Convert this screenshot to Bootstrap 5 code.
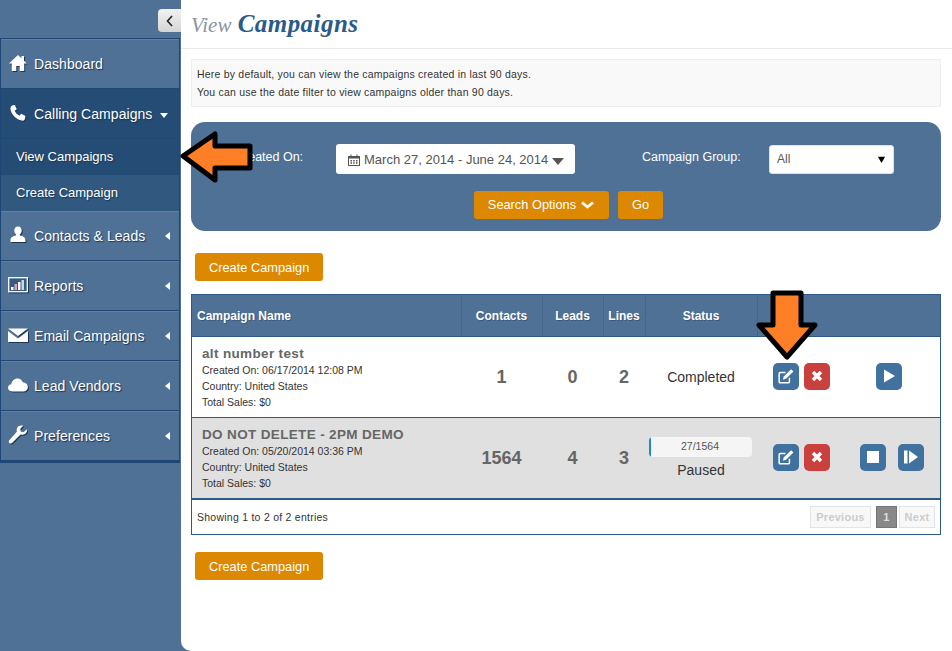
<!DOCTYPE html>
<html lang="en">
<head>
    <meta charset="UTF-8">
    <meta name="viewport" content="width=device-width, initial-scale=1.0">
    <title>View Campaigns</title>
    <link href="https://cdn.jsdelivr.net/npm/bootstrap@5.3.0/dist/css/bootstrap.min.css" rel="stylesheet">
    <style>
        html, body { height: 100%; }
        body { font-family: "Liberation Sans", Arial, sans-serif; background: #4f7196; overflow: hidden; position: relative; color: #333; }
        a { text-decoration: none; }
        .page-wrap { height: 651px; }

        /* sidebar */
        .side { width: 181px; flex: none; padding-top: 9px; }
        .side-toggle { width: 23px; height: 23px; margin-left: auto; margin-bottom: 6px; background: linear-gradient(#f2f2f2, #d5d5d5); border-radius: 4px 0 0 4px; }
        .side-menu { width: 180px; border: 1px solid #1f4776; border-bottom-width: 2px; }
        .side-menu .nav-link { height: 50px; display: flex; align-items: center; color: #fff; font-size: 14px; letter-spacing: .05px; padding: 0 0 0 7px; border-bottom: 1px solid #1f4776; border-top: 1px solid #5f81a6; text-shadow: 1px 1px 1px #1c3553; }
        .side-menu .nav-link.is-open { background: #254c74; border-top-color: #254c74; }
        .side-menu .nav-link svg.ico { width: 20px; height: 20px; margin: -3px 6px 0 0; flex: none; filter: drop-shadow(1px 1px 0 #1c3553); }
        .side-menu .sub-link { height: 36px; display: flex; align-items: center; padding-left: 15px; color: #fff; font-size: 13px; background: #31587f; text-shadow: 1px 1px 1px #1c3553; }
        .side-menu .sub-link.now { background: #254c74; }
        .caret-left { width: 0; height: 0; border: 4px solid transparent; border-right: 5px solid #fff; border-left: 0; margin-left: auto; margin-right: 9px; }
        .caret-down { width: 0; height: 0; border: 4px solid transparent; border-top: 5px solid #fff; border-bottom: 0; margin-left: 8px; margin-top: 3px; }

        /* main */
        .main-area { background: #fff; flex: 1; border-radius: 0 0 0 10px; padding: 0 11px 0 10px; min-width: 0; }
        .head-bar { height: 49px; margin: 0 -11px 10px -10px; padding: 6px 0 0 10px; border-bottom: 1px solid #eaeaea; font-family: "Liberation Serif", "Times New Roman", serif; font-style: italic; font-size: 21px; color: #8b959f; line-height: 36px; }
        .head-bar b { font-size: 25px; color: #2c5a88; letter-spacing: .45px; margin-left: 1px; }
        .info-box { height: 48px; background: #f9f9f9; border: 1px solid #eee; padding: 5px 5px; font-size: 10.5px; line-height: 18px; letter-spacing: .21px; color: #333; }
        .filter-box { height: 109px; margin-top: 15px; background: #4f7196; border-radius: 14px; padding: 22px 0 0 44px; color: #fff; font-size: 12.5px; }
        .filter-lbl { width: 101px; margin-top: -4px; }
        .date-pick { width: 239px; height: 30px; background: #fff; border-radius: 3px; color: #555; font-size: 13px; padding: 1px 0 0 12px; gap: 4px; white-space: nowrap; }
        .group-lbl { margin-left: 67px; width: 127px; margin-top: -4px; }
        .group-sel { width: 125px; height: 29px; padding: 2px 7px; font-size: 12px; color: #555; border-radius: 3px; background-size: 9px; background-position: right 7px center; background-image: url("data:image/svg+xml,%3csvg xmlns='http://www.w3.org/2000/svg' viewBox='0 0 10 10'%3e%3cpath d='M1 2h8L5 9z' fill='%23000'/%3e%3c/svg%3e"); }
        .filter-btns { margin: 17px 0 0 -44px; padding-left: 5px; gap: 9px; }
        .btn-org { background: #dc8800; color: #fff; border: 0; border-radius: 3px; font-size: 12.8px; height: 28px; padding: 0 14px; display: inline-flex; align-items: center; }
        .btn-org:hover { background: #c97c00; color: #fff; }
        .create-btn { margin-left: 4px; }
        .create-btn .btn-org { padding-top: 1px; }
        .first-create { margin-top: 22px; }

        /* table */
        .camp-wrap { margin-top: 13px; border: 1px solid #2f5a88; }
        .camp-table { table-layout: fixed; margin: 0; width: 100%; }
        .camp-table > thead th { background: #4f7196; color: #fff; height: 41px; font-size: 12px; text-align: center; vertical-align: middle; border-bottom: 1px solid #2f5a88; border-right: 1px solid #456789; padding: 1px 0 0; text-shadow: 1px 1px 0 #3c5a7c; }
        .camp-table > thead th:last-child { border-right: 0; }
        .camp-table > thead th:first-child { text-align: left; padding-left: 5px; }
        .camp-table > tbody td { height: 81px; padding: 9px 0 0; vertical-align: middle; text-align: center; border-bottom: 1px solid #2f5a88; background: #fff; color: #333; box-shadow: none; }
        .camp-table > tbody tr.shaded td { background: #e0e0e0; border-bottom-width: 2px; height: 82px; }
        .camp-table > tbody td.name-cell { text-align: left; padding: 8px 0 0 10px; font-size: 10.5px; line-height: 16px; vertical-align: top; }
        .name-cell strong { display: block; color: #666; font-size: 13.5px; letter-spacing: .35px; line-height: 17px; }
        .camp-table > tbody td.num-cell { font-size: 18px; font-weight: 700; color: #666; padding: 2px 0 0; }
        .camp-table > tbody td.stat-cell { font-size: 14px; padding: 2px 0 0; }
        .camp-table > tbody tr.shaded td.stat-cell { padding-top: 3px; }
        .act-row { padding: 0 6px 1px 16px; gap: 5px; }
        .act-btn { width: 26px; height: 27px; border: 0; padding: 0; border-radius: 5px; display: inline-flex; align-items: center; justify-content: center; background: #40719f; }
        .act-btn.del { background: #c9403c; }
        .run-group { width: 82px; margin-left: 7px; gap: 12px; }
        .run-one { margin-right: 22px; }
        .act-btn svg { width: 16px; height: 16px; }
        .load-bar { height: 20px; width: 103px; margin: 0 auto 3px; background: #f5f5f5; border-radius: 4px; position: relative; font-size: 10.5px; color: #555; transform: translateX(-1px); }
        .load-bar .progress-bar { background: #1f8ad0; }
        .load-text { position: absolute; left: 0; right: 0; top: 0; line-height: 19px; }
        .tbl-foot { height: 34px; padding: 1px 5px 0; font-size: 10.5px; letter-spacing: .25px; color: #333; }
        .pager { gap: 6px; margin: -1px 0 0; }
        .pager .page-link, .pager .page-item:first-child .page-link, .pager .page-item:last-child .page-link { font-size: 11px; font-weight: 700; height: 22px; width: 61px; padding: 0; text-align: center; line-height: 20px; color: #ccc; background: #f8f8f8; border: 1px solid #e4e4e4; border-radius: 0; }
        .pager .page-item.active .page-link { background: #888; color: #ddd; border-color: #777; width: 21px; }
        .pager .page-item:last-child { margin-left: -3px; }
        .pager .page-item:last-child .page-link { width: 36px; }
        .second-create { margin-top: 17px; }

        /* arrows drawn over the shot */
        .over-arrow { position: absolute; }
        .arrow-left { left: 178px; top: 129px; }
        .arrow-down { left: 755px; top: 289px; }
    </style>
</head>
<body>
    <div class="d-flex page-wrap">
        <aside class="side">
            <div class="side-toggle d-flex align-items-center justify-content-center">
                <svg width="10" height="12" viewBox="0 0 10 12"><path d="M7 1L2.500 6 7 11" fill="none" stroke="#222" stroke-width="1.600"/></svg>
            </div>
            <ul class="nav flex-column side-menu">
                <li><a class="nav-link" href="#">
                    <svg class="ico" viewBox="0 0 20 20"><path d="M10 2L1 10.500h2.800V18h4.500v-5h3.400v5h4.500v-7.500H19L16 7.700V3h-2.500v2.300z" fill="#fff"/></svg>Dashboard</a></li>
                <li><a class="nav-link is-open" href="#">
                    <svg class="ico" viewBox="0 0 20 20"><path d="M4 2.500L6.800 2l2 4.200-2 1.600c.8 2.300 2.400 4 4.700 5l1.700-2 4.300 2.100-.6 3C16.500 17.300 15 18 13.500 17.600 8 16.300 3.500 11.500 2.500 6.500 2.200 5 2.900 3.300 4 2.500z" fill="#fff"/></svg>Calling Campaigns<span class="caret-down"></span></a>
                    <a class="sub-link now" href="#">View Campaigns</a>
                    <a class="sub-link" href="#">Create Campaign</a></li>
                <li><a class="nav-link" href="#">
                    <svg class="ico" viewBox="0 0 20 20"><path d="M10 1.500c2.500 0 3.700 1.900 3.700 4 0 1.500-.7 3-1.700 3.800v1.200c2.800.8 5.500 1.500 5.500 4.500v2H2.500v-2c0-3 2.700-3.700 5.500-4.500V9.300C7 8.500 6.300 7 6.300 5.500c0-2.100 1.200-4 3.700-4z" fill="#fff"/></svg>Contacts &amp; Leads<span class="caret-left"></span></a></li>
                <li><a class="nav-link" href="#">
                    <svg class="ico" viewBox="0 0 20 20"><rect x=".7" y="2.700" width="18.600" height="14" fill="#365a80" stroke="#fff" stroke-width="1.300"/><rect x="3" y="12" width="2.500" height="3" fill="#fff"/><rect x="6.500" y="9" width="2.500" height="6" fill="#e2a0b8"/><rect x="10" y="7" width="2.500" height="8" fill="#fff"/><rect x="13.500" y="5" width="2.500" height="10" fill="#c9d8ee"/></svg>Reports<span class="caret-left"></span></a></li>
                <li><a class="nav-link" href="#">
                    <svg class="ico" viewBox="0 0 20 20"><path d="M0 3.500h20L10 11zM0 6l10 7.500L20 6v11H0z" fill="#fff"/></svg>Email Campaigns<span class="caret-left"></span></a></li>
                <li><a class="nav-link" href="#">
                    <svg class="ico" viewBox="0 0 20 20"><path d="M4.500 16.500C2 16.500 0 15 0 12.800c0-2 1.500-3.400 3.300-3.600C3.800 6 6.300 3.500 9.500 3.500c2.500 0 4.600 1.400 5.400 3.700 2.800.3 5 2.300 5 5 0 2.500-2 4.300-4.600 4.300z" fill="#fff"/></svg>Lead Vendors<span class="caret-left"></span></a></li>
                <li><a class="nav-link" href="#">
                    <svg class="ico" viewBox="0 0 20 20"><path d="M18.800 4.200l-3.300 3-2.600-.7-.7-2.600 3-3.200c-2.500-.7-5 .1-6 2-.7 1.300-.6 2.800-.2 3.900L1.500 15c-1 1-1 2.200-.2 3 .8.800 2 .8 3-.2l8.300-8.300c1.300.5 2.900.4 4.200-.4 1.800-1.100 2.700-3 2-4.900z" fill="#fff"/></svg>Preferences<span class="caret-left"></span></a></li>
            </ul>
        </aside>

        <main class="main-area">
            <div class="head-bar">View <b>Campaigns</b></div>
            <div class="info-box">Here by default, you can view the campaigns created in last 90 days.<br>You can use the date filter to view campaigns older than 90 days.</div>

            <div class="filter-box">
                <div class="d-flex align-items-center">
                    <span class="filter-lbl">Created On:</span>
                    <div class="date-pick d-flex align-items-center">
                        <svg width="12" height="12" viewBox="0 0 12 12"><path d="M0 2h2.500V.5h1V2h5V.5h1V2H12v10H0zM1 4.500V11h10V4.500zM2.500 6h1.500v1.500H2.500zm2.700 0h1.500v1.500H5.200zm2.800 0h1.500v1.500H8zM2.500 8.300h1.500v1.500H2.500zm2.700 0h1.500v1.500H5.200zm2.800 0h1.500v1.500H8z" fill="#555"/></svg>
                        <span>March 27, 2014 - June 24, 2014</span>
                        <svg width="12" height="7" viewBox="0 0 12 7" class="mt-1"><path d="M0 0h12L6 7z" fill="#555"/></svg>
                    </div>
                    <span class="group-lbl">Campaign Group:</span>
                    <select class="form-select group-sel"><option>All</option></select>
                </div>
                <div class="d-flex justify-content-center filter-btns">
                    <button class="btn-org" type="button">Search Options
                        <svg class="ms-1" width="15" height="10" viewBox="0 0 15 10"><path d="M2 2.500l5.500 4.500 5.500-4.500" fill="none" stroke="#fff" stroke-width="2.800"/></svg>
                    </button>
                    <button class="btn-org" type="button">Go</button>
                </div>
            </div>

            <div class="create-btn first-create"><button class="btn-org" type="button">Create Campaign</button></div>

            <div class="camp-wrap">
                <table class="table camp-table">
                    <colgroup>
                        <col style="width:269px"><col style="width:81px"><col style="width:61px"><col style="width:42px"><col style="width:112px"><col>
                    </colgroup>
                    <thead>
                        <tr><th>Campaign Name</th><th>Contacts</th><th>Leads</th><th>Lines</th><th>Status</th><th></th></tr>
                    </thead>
                    <tbody>
                        <tr>
                            <td class="name-cell"><strong>alt number test</strong>Created On: 06/17/2014 12:08 PM<br>Country: United States<br>Total Sales: $0</td>
                            <td class="num-cell">1</td><td class="num-cell">0</td><td class="num-cell">2</td>
                            <td class="stat-cell">Completed</td>
                            <td class="p-0">
                                <div class="d-flex align-items-center act-row">
                                    <button class="act-btn" type="button"><svg viewBox="1 1 14 14"><path d="M11 9.500V13a1 1 0 0 1-1 1H3a1 1 0 0 1-1-1V6a1 1 0 0 1 1-1h4.500" fill="none" stroke="#fff" stroke-width="1.300"/><path d="M6 8.500L12.500 2l2 2L8 10.500l-2.700.7z" fill="#fff"/></svg></button>
                                    <button class="act-btn del" type="button"><svg viewBox="0 0 16 16"><path d="M4 4l8 8M12 4l-8 8" stroke="#fff" stroke-width="3.400"/></svg></button>
                                    <div class="d-flex justify-content-end run-group">
                                        <button class="act-btn run-one" type="button"><svg viewBox="0 0 16 16"><path d="M3 1.500L14 8 3 14.500z" fill="#fff"/></svg></button>
                                    </div>
                                </div>
                            </td>
                        </tr>
                        <tr class="shaded">
                            <td class="name-cell"><strong>DO NOT DELETE - 2PM DEMO</strong>Created On: 05/20/2014 03:36 PM<br>Country: United States<br>Total Sales: $0</td>
                            <td class="num-cell">1564</td><td class="num-cell">4</td><td class="num-cell">3</td>
                            <td class="stat-cell">
                                <div class="progress load-bar"><div class="progress-bar" style="width:2.500%"></div><span class="load-text">27/1564</span></div>
                                Paused
                            </td>
                            <td class="p-0">
                                <div class="d-flex align-items-center act-row">
                                    <button class="act-btn" type="button"><svg viewBox="1 1 14 14"><path d="M11 9.500V13a1 1 0 0 1-1 1H3a1 1 0 0 1-1-1V6a1 1 0 0 1 1-1h4.500" fill="none" stroke="#fff" stroke-width="1.300"/><path d="M6 8.500L12.500 2l2 2L8 10.500l-2.700.7z" fill="#fff"/></svg></button>
                                    <button class="act-btn del" type="button"><svg viewBox="0 0 16 16"><path d="M4 4l8 8M12 4l-8 8" stroke="#fff" stroke-width="3.400"/></svg></button>
                                    <div class="d-flex justify-content-end run-group">
                                        <button class="act-btn" type="button"><svg viewBox="0 0 16 16"><rect x="2" y="2" width="12" height="12" fill="#fff"/></svg></button>
                                        <button class="act-btn" type="button"><svg viewBox="0 0 16 16"><rect x="1" y="1.500" width="3.500" height="13" fill="#fff"/><path d="M6 1.500L15 8l-9 6.500z" fill="#fff"/></svg></button>
                                    </div>
                                </div>
                            </td>
                        </tr>
                    </tbody>
                </table>
                <div class="d-flex align-items-center justify-content-between tbl-foot">
                    <span>Showing 1 to 2 of 2 entries</span>
                    <ul class="pagination pager">
                        <li class="page-item disabled"><a class="page-link" href="#">Previous</a></li>
                        <li class="page-item active"><a class="page-link" href="#">1</a></li>
                        <li class="page-item disabled"><a class="page-link" href="#">Next</a></li>
                    </ul>
                </div>
            </div>

            <div class="create-btn second-create"><button class="btn-org" type="button">Create Campaign</button></div>
        </main>
    </div>

    <svg class="over-arrow arrow-left" width="78" height="56" viewBox="0 0 78 56"><path d="M5 27L37 5v12h35v22H37v12z" fill="#ff7f27" stroke="#000" stroke-width="5" stroke-linejoin="round"/></svg>
    <svg class="over-arrow arrow-down" width="64" height="72" viewBox="0 0 64 72"><path d="M18 4h28v32h14L32 68 4 36h14z" fill="#ff7f27" stroke="#000" stroke-width="5" stroke-linejoin="round"/></svg>

    <script src="https://cdn.jsdelivr.net/npm/bootstrap@5.3.0/dist/js/bootstrap.bundle.min.js"></script>
</body>
</html>
